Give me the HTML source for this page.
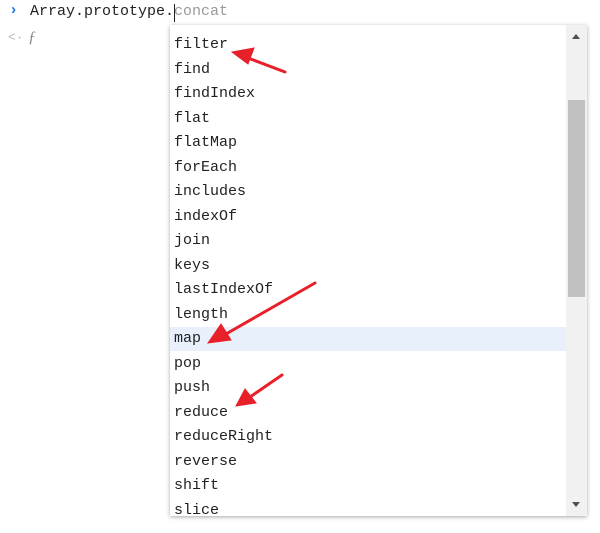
<!DOCTYPE html>
<html><head><meta charset="utf-8"><style>
html,body{margin:0;padding:0;width:600px;height:533px;background:#fff;overflow:hidden;position:relative;font-family:"Liberation Mono",monospace;}
.line{position:absolute;left:30px;top:3px;font-size:15px;color:#222;white-space:pre}
.gt{position:absolute;left:9px;top:2px;color:#1a73e8;font-size:15px;font-weight:bold}
.lt{position:absolute;left:8px;top:30px;color:#bbb;font-size:13px}
.f{position:absolute;left:28px;top:29px;color:#888;font-style:italic;font-family:"Liberation Serif",serif;font-size:16px}
.caret{position:absolute;left:174px;top:4px;width:1px;height:18px;background:#222}
.pop{position:absolute;left:170px;top:25px;width:417px;height:491px;background:#fff;box-shadow:0 1px 4px rgba(0,0,0,.35);overflow:hidden}
.row{position:absolute;left:0;width:396px;height:24px;line-height:24px;padding-left:4px;font-size:15px;color:#222}
.hl{background:#e8f0fb}
.sb{position:absolute;right:0;top:0;width:21px;height:491px;background:#f1f1f1}
.thumb{position:absolute;left:2px;top:75px;width:17px;height:197px;background:#c1c1c1}
.up,.dn{position:absolute;left:6px;width:0;height:0;border-left:4px solid transparent;border-right:4px solid transparent}
.up{top:9px;border-bottom:5px solid #505050}
.dn{bottom:9px;border-top:5px solid #505050}
</style></head><body>
<div class="gt">›</div>
<div class="line">Array.prototype.<span style="color:#999">concat</span></div>
<div class="caret"></div>
<div class="lt">&lt;·</div>
<div class="f">ƒ</div>
<div class="pop">
<div class="row" style="top:8px">filter</div>
<div class="row" style="top:32.5px">find</div>
<div class="row" style="top:57px">findIndex</div>
<div class="row" style="top:81.5px">flat</div>
<div class="row" style="top:106px">flatMap</div>
<div class="row" style="top:130.5px">forEach</div>
<div class="row" style="top:155px">includes</div>
<div class="row" style="top:179.5px">indexOf</div>
<div class="row" style="top:204px">join</div>
<div class="row" style="top:228.5px">keys</div>
<div class="row" style="top:253px">lastIndexOf</div>
<div class="row" style="top:277.5px">length</div>
<div class="row hl" style="top:302px">map</div>
<div class="row" style="top:326.5px">pop</div>
<div class="row" style="top:351px">push</div>
<div class="row" style="top:375.5px">reduce</div>
<div class="row" style="top:400px">reduceRight</div>
<div class="row" style="top:424.5px">reverse</div>
<div class="row" style="top:449px">shift</div>
<div class="row" style="top:473.5px">slice</div>
<div class="sb"><div class="up"></div><div class="thumb"></div><div class="dn"></div></div>
</div>
<svg width="600" height="533" style="position:absolute;left:0;top:0">
<g fill="#e8202a" stroke="#e8202a" stroke-linecap="round">
<line x1="285" y1="72" x2="248" y2="58" stroke-width="3"/>
<polygon points="232,52 254,48 248,64" stroke-width="1"/>
<line x1="315" y1="283" x2="226" y2="334" stroke-width="3"/>
<polygon points="208,343 221,324 231,340" stroke-width="1"/>
<line x1="282" y1="375" x2="250" y2="397" stroke-width="3"/>
<polygon points="236,406 245,389 256,403" stroke-width="1"/>
</g>
</svg>
</body></html>
